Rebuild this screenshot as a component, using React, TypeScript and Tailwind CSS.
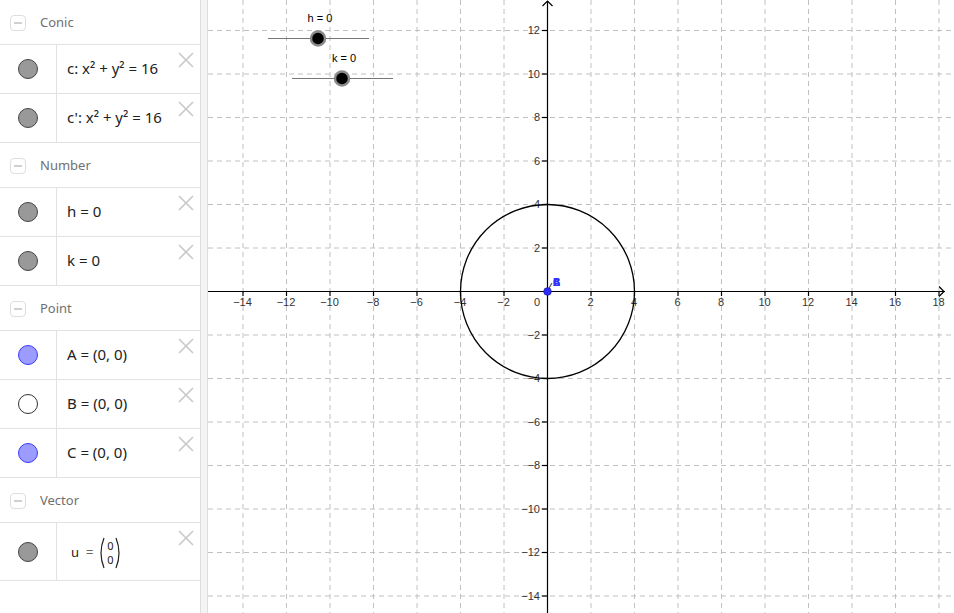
import React from 'react'

/** pixels per unit on both axes */
const S = 21.75
const OX = 339
const OY = 291
const W = 746
const H = 613

type Marker = 'gray' | 'blue' | 'white'

interface Item {
  marker: Marker
  text: React.ReactNode
}

interface Section {
  title: string
  items: Item[]
}

const sections: Section[] = [
  {
    title: 'Conic',
    items: [
      { marker: 'gray', text: 'c: x² + y² = 16' },
      { marker: 'gray', text: "c': x² + y² = 16" },
    ],
  },
  {
    title: 'Number',
    items: [
      { marker: 'gray', text: 'h = 0' },
      { marker: 'gray', text: 'k = 0' },
    ],
  },
  {
    title: 'Point',
    items: [
      { marker: 'blue', text: 'A = (0, 0)' },
      { marker: 'white', text: 'B = (0, 0)' },
      { marker: 'blue', text: 'C = (0, 0)' },
    ],
  },
]

const markerClass: Record<Marker, string> = {
  gray: 'bg-[#999999] border-[#444444]',
  blue: 'bg-[#9c9cff] border-[#3a3aff]',
  white: 'bg-white border-[#333333]',
}

function CloseIcon() {
  return (
    <svg width="18" height="18" viewBox="0 0 18 18" className="absolute right-[5px] top-[6px]">
      <path d="M2 2 L16 16 M16 2 L2 16" stroke="#c8c8c8" strokeWidth="1.6" />
    </svg>
  )
}

function SectionHeader({ title }: { title: string }) {
  return (
    <div className="h-[45px] border-b border-[#e2e2e2] flex items-center pt-[2px]">
      <div className="ml-[10px] w-[16px] h-[16px] rounded-[4px] border border-[#dedede] flex items-center justify-center">
        <div className="w-[8px] h-[2px] bg-[#d0d0d0]" />
      </div>
      <span className="ml-[14px] text-[13px] text-[#707070]">{title}</span>
    </div>
  )
}

function Row({ marker, text, tall }: { marker: Marker; text: React.ReactNode; tall?: boolean }) {
  return (
    <div className={`relative flex border-b border-[#e2e2e2] ${tall ? 'h-[58px]' : 'h-[49px]'}`}>
      <div className="w-[57px] border-r border-[#e2e2e2] flex items-center justify-center">
        <div className={`w-[20px] h-[20px] rounded-full border ${markerClass[marker]}`} />
      </div>
      <div className="flex items-center pl-[10px] pb-[2px] text-[15px] text-[#222222] whitespace-pre">{text}</div>
      <CloseIcon />
    </div>
  )
}

function VectorText() {
  return (
    <div className="flex items-center pl-[4px] pt-[4px] text-[13px] text-[#222222]">
      <span>u</span>
      <span className="ml-[7px] mr-[5px] text-[#666666]">=</span>
      <svg width="7" height="32" viewBox="0 0 7 32" className="shrink-0">
        <path d="M6 1 Q0 16 6 31" stroke="#222" strokeWidth="1.2" fill="none" />
      </svg>
      <div className="flex flex-col items-center gap-[1px] text-[11px] leading-[13px] w-[10px]">
        <span>0</span>
        <span>0</span>
      </div>
      <svg width="7" height="32" viewBox="0 0 7 32" className="shrink-0">
        <path d="M1 1 Q7 16 1 31" stroke="#222" strokeWidth="1.2" fill="none" />
      </svg>
    </div>
  )
}

function AlgebraView() {
  return (
    <div className="w-[200px] h-full bg-white shrink-0">
      {sections.map((s) => (
        <div key={s.title}>
          <SectionHeader title={s.title} />
          {s.items.map((it, i) => (
            <Row key={i} marker={it.marker} text={it.text} />
          ))}
        </div>
      ))}
      <SectionHeader title="Vector" />
      <Row marker="gray" text={<VectorText />} tall />
    </div>
  )
}

const fmt = (n: number) => (n < 0 ? `\u2212${-n}` : `${n}`)

function Graphics() {
  const xs: number[] = []
  for (let k = -7; k <= 9; k++) xs.push(k * 2)
  const ys: number[] = []
  for (let k = -7; k <= 6; k++) ys.push(k * 2)

  return (
    <svg width={W} height={H} className="block" style={{ fontFamily: '"Liberation Sans", Arial, sans-serif' }}>
      <rect width={W} height={H} fill="#ffffff" />
      {/* grid */}
      <g stroke="#c0c0c0" strokeWidth="1" strokeDasharray="5 4">
        {xs.map((v) => (v === 0 ? null : <line key={`gx${v}`} x1={OX + v * S + 0.5} y1={0} x2={OX + v * S + 0.5} y2={H} />))}
        {ys.map((v) => (v === 0 ? null : <line key={`gy${v}`} x1={0} y1={OY - v * S + 0.5} x2={W} y2={OY - v * S + 0.5} />))}
      </g>
      {/* axes */}
      <g stroke="#000" strokeWidth="1.2" fill="none">
        <line x1={0} y1={OY + 0.5} x2={W - 9} y2={OY + 0.5} />
        <path d={`M${W - 15} ${OY - 4.5} L${W - 10} ${OY + 0.5} L${W - 15} ${OY + 5.5}`} />
        <line x1={OX + 0.5} y1={1} x2={OX + 0.5} y2={H} />
        <path d={`M${OX - 4.5} ${6} L${OX + 0.5} ${1} L${OX + 5.5} ${6}`} />
        {xs.map((v) => (v === 0 ? null : <line key={`tx${v}`} x1={OX + v * S + 0.5} y1={OY} x2={OX + v * S + 0.5} y2={OY + 5} />))}
        {ys.map((v) => (v === 0 ? null : <line key={`ty${v}`} x1={OX - 5} y1={OY - v * S + 0.5} x2={OX} y2={OY - v * S + 0.5} />))}
      </g>
      <g fontSize="11" fill="#333">
        {xs.map((v) =>
          v === 0 ? null : (
            <text key={`lx${v}`} x={OX + v * S} y={OY + 15} textAnchor="middle">
              {fmt(v)}
            </text>
          ),
        )}
        {ys.map((v) =>
          v === 0 ? null : (
            <text key={`ly${v}`} x={OX - 7} y={OY - v * S + 4} textAnchor="end">
              {fmt(v)}
            </text>
          ),
        )}
        <text x={OX - 7} y={OY + 15} textAnchor="end">
          0
        </text>
      </g>
      {/* circle */}
      <circle cx={OX + 0.5} cy={OY + 0.5} r={4 * S} fill="none" stroke="#000" strokeWidth="1.3" />
      {/* vector u (zero) + points */}
      <line x1={OX + 1} y1={OY - 1} x2={OX + 5} y2={OY - 8} stroke="#555" strokeWidth="1.2" />
      <circle cx={OX + 0.5} cy={OY + 0.5} r={3.8} fill="#2b2bff" stroke="#1a1a99" strokeWidth="0.8" />
      <g fontSize="10" fill="#3030ff" fontWeight="bold">
        <text x={OX + 6} y={OY - 5}>A</text>
        <text x={OX + 6} y={OY - 5}>B</text>
        <text x={OX + 6} y={OY - 5}>C</text>
      </g>
      {/* sliders */}
      <g>
        <line x1={60} y1={38.5} x2={161} y2={38.5} stroke="#777" strokeWidth="1.2" />
        <circle cx={110} cy={38.5} r={7} fill="#000" stroke="#8a8a8a" strokeWidth="2.5" />
        <text x={112} y={22} fontSize="11" textAnchor="middle" fill="#000">
          h = 0
        </text>
        <line x1={84} y1={78.5} x2={185} y2={78.5} stroke="#777" strokeWidth="1.2" />
        <circle cx={134} cy={78.5} r={7} fill="#000" stroke="#8a8a8a" strokeWidth="2.5" />
        <text x={136} y={62} fontSize="11" textAnchor="middle" fill="#000">
          k = 0
        </text>
      </g>
    </svg>
  )
}

export default function App() {
  return (
    <div className="w-[954px] h-[613px] flex overflow-hidden bg-white" style={{ fontFamily: '"Noto Sans", "DejaVu Sans", sans-serif' }}>
      <AlgebraView />
      <div className="w-[8px] h-full bg-[#f4f4f4] border-l border-r border-[#dddddd] shrink-0" />
      <Graphics />
    </div>
  )
}
